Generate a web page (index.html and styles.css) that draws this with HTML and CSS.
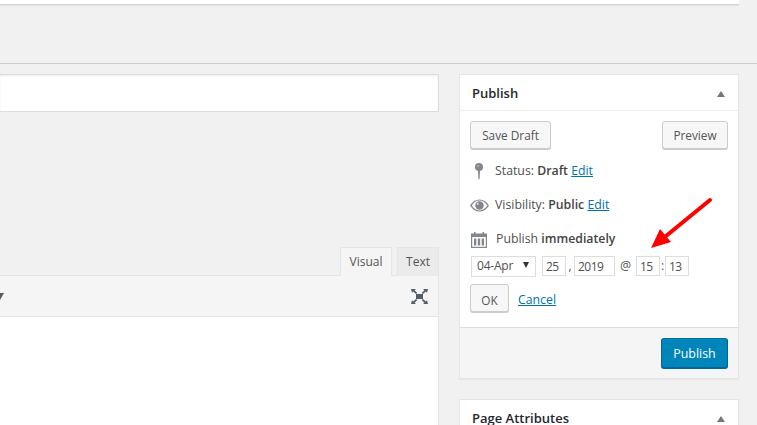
FILE: index.html
```html
<!DOCTYPE html>
<html lang="en">
<head>
<meta charset="utf-8">
<title>Edit Page</title>
<link rel="stylesheet" href="styles.css">
</head>
<body>
<div class="page">
  <div class="topstrip"></div>
  <div class="rule"></div>
  <div class="columns">
    <main class="main">
      <div class="title-input"></div>
      <div class="tabs">
        <span class="tab active">Visual</span>
        <span class="tab plain">Text</span>
      </div>
      <div class="toolbar">
        <svg class="caret" width="6" height="7" viewBox="0 0 6 7"><path d="M-3 0H4L0 7Z" fill="#555d66"/></svg>
        <svg class="fullscreen" width="17" height="15" viewBox="0 0 17 15"><g fill="#555d66"><rect x="5" y="5" width="7" height="5"/><path d="M0 0H5L3.600 1.300 6.300 4 5 5 2.200 2.400 1 3.800Z"/><path d="M17 0H12L13.400 1.300 10.700 4 12 5 14.800 2.400 16 3.800Z"/><path d="M0 15H5L3.600 13.700 6.300 11 5 10 2.200 12.600 1 11.200Z"/><path d="M17 15H12L13.400 13.700 10.700 11 12 10 14.800 12.600 16 11.200Z"/></g></svg>
      </div>
      <div class="editor"></div>
    </main>
    <aside class="side">
      <section class="box publish">
        <header class="box-head"><h2>Publish</h2><span class="toggle"></span></header>
        <div class="box-body">
          <div class="actions">
            <button class="btn draft">Save Draft</button>
            <button class="btn preview">Preview</button>
          </div>
          <div class="row status">
            <svg class="ico" width="8" height="16" viewBox="0 0 8 16"><circle cx="4" cy="4" r="4" fill="#82878c"/><circle cx="3" cy="2.800" r=".9" fill="#c4c6c8"/><path d="M3 7h2l-.4 9h-1.200Z" fill="#82878c"/></svg>
            <span>Status: <b>Draft</b> <a href="#">Edit</a></span>
          </div>
          <div class="row visibility">
            <svg class="ico" width="19" height="13" viewBox="0 0 19 13"><path fill-rule="evenodd" fill="#82878c" d="M0 6.500C2.400 2.600 5.700.4 9.500.4S16.600 2.600 19 6.500c-2.400 3.900-5.700 6.100-9.500 6.100S2.400 10.400 0 6.500ZM1.600 6.500c2 2.900 4.800 4.900 7.900 4.900s5.900-2 7.900-4.900c-2-2.900-4.800-4.900-7.900-4.900S3.600 3.600 1.600 6.500Z"/><circle cx="9.500" cy="6.500" r="4.200" fill="#82878c"/><circle cx="7.800" cy="4.800" r="1.100" fill="#d8d9da"/></svg>
            <span>Visibility: <b>Public</b> <a href="#">Edit</a></span>
          </div>
          <div class="row schedule">
            <svg class="ico" width="16" height="17" viewBox="0 0 16 17"><path fill="#82878c" d="M0 2.500H3V1h1.500v1.500h7V1H13v1.500h3V17H0Z"/><rect x="1.200" y="6" width="13.600" height="9.800" fill="#fff"/><path fill="#82878c" d="M3 7.500h2.300v7H3ZM6.800 7.500h2.400v7H6.800ZM10.700 7.500H13v7h-2.300Z"/></svg>
            <span>Publish <b>immediately</b></span>
          </div>
          <div class="stamp">
            <span class="select">04-Apr<i class="sel-arrow"></i></span>
            <span class="field w-day">25</span><span class="sep">,</span>
            <span class="field w-year">2019</span><span class="sep at">@</span>
            <span class="field w-time">15</span><span class="sep colon">:</span>
            <span class="field w-min">13</span>
          </div>
          <div class="confirm">
            <button class="btn ok">OK</button>
            <a class="cancel" href="#">Cancel</a>
          </div>
          <svg class="arrow" width="64" height="56" viewBox="0 0 64 56"><path d="M60 3 16 39" stroke="#f00" stroke-width="4" stroke-linecap="round" fill="none"/><path d="M1 51 10 32 21 45Z" fill="#f00"/></svg>
        </div>
        <footer class="box-foot"><button class="btn primary">Publish</button></footer>
      </section>
      <section class="box attrs">
        <header class="box-head"><h2>Page Attributes</h2><span class="toggle"></span></header>
      </section>
    </aside>
  </div>
</div>
</body>
</html>
```
FILE: styles.css
```css
* { box-sizing: border-box; }
html, body { margin: 0; height: 100%; }
body {
  background: #f1f1f1;
  color: #505050;
  font: 12.3px/1.4 "Open Sans", sans-serif;
  overflow: hidden;
}
.page { width: 757px; height: 425px; overflow: hidden; }
.topstrip { width: 739px; height: 5px; background: #fff; border-bottom: 1px solid #d6d6d6; box-shadow: 0 1px 1px rgba(0,0,0,.05); }
.rule { height: 1px; margin-top: 58px; background: #ccc; }
.columns { display: flex; align-items: flex-start; margin-top: 10px; }
.main { width: 439px; flex: none; }
.title-input { height: 38px; background: #fff; border: 1px solid #ddd; border-left: 0; box-shadow: inset 0 1px 2px rgba(0,0,0,.07); }
.tabs { display: flex; justify-content: flex-end; gap: 5px; height: 29px; margin-top: 135px; position: relative; z-index: 1; }
.tab { display: block; width: 52px; height: 29px; text-align: center; line-height: 27px; font-size: 12px; color: #555; background: #ebebeb; border: 1px solid #e5e5e5; border-bottom: 0; }
.tab.plain { width: 42px; }
.tab.active { background: #f5f5f5; border-bottom: 1px solid #f5f5f5; }
.toolbar { display: flex; justify-content: space-between; align-items: center; height: 42px; background: #f5f5f5; border: 1px solid #e5e5e5; border-left: 0; margin-top: -1px; padding: 0 10px 0 0; }
.editor { height: 110px; background: #fff; border-right: 1px solid #e5e5e5; }
.side { width: 280px; margin-left: 20px; flex: none; }
.box { background: #fff; border: 1px solid #e5e5e5; box-shadow: 0 1px 1px rgba(0,0,0,.04); }
.box-head { display: flex; justify-content: space-between; align-items: center; height: 36px; padding: 1px 12px 0; border-bottom: 1px solid #eee; }
h2 { margin: 0; font-size: 13px; font-weight: 600; color: #23282d; line-height: 1.4; }
.toggle { width: 0; height: 0; margin: 2px 1px 0 0; border: 4px solid transparent; border-top: 0; border-bottom: 6px solid #72777c; }
.box-body { position: relative; padding: 10px 10px 0 10px; height: 216px; }
.actions { display: flex; justify-content: space-between; }
.btn { display: inline-block; height: 28px; padding: 1px 0 0; font: 11.8px/25px "Open Sans", sans-serif; color: #555; background: #f7f7f7; border: 1px solid #ccc; border-radius: 3px; box-shadow: 0 1px 0 #ccc; }
.draft { width: 81px; }
.preview { width: 66px; }
.ok { width: 39px; padding-top: 3px; }
.cancel { padding-top: 3px; }
.row { display: flex; align-items: center; }
.row b { font-weight: 600; color: #444; }
a { color: #0073aa; }
.status { height: 20px; margin-top: 12px; }
.status .ico { margin: 0 12px 0 5px; }
.visibility { height: 20px; margin-top: 14px; }
.visibility .ico { margin: 0 6px 0 0; }
.schedule { height: 20px; margin-top: 14px; }
.schedule .ico { margin: 0 9px 0 1px; }
.stamp { display: flex; align-items: center; margin: 7px 0 0 1px; font-size: 12px; height: 20px; }
.select { display: flex; justify-content: space-between; align-items: center; flex: none; width: 65px; height: 21px; padding: 0 6px 0 5px; background: #fff; border: 1px solid #ddd; margin-right: 6px; letter-spacing: -.2px; }
.sel-arrow { width: 0; height: 0; margin-top: -2px; border: 3.500px solid transparent; border-top: 6px solid #333; border-bottom: 0; }
.field { flex: none; height: 20px; padding: 0 3px; line-height: 19px; background: #fff; border: 1px solid #ddd; letter-spacing: -.5px; }
.w-day { width: 24px; }
.w-year { width: 41px; }
.w-time { width: 24px; }
.w-min { width: 24px; }
.sep { flex: none; width: 8px; text-align: center; color: #555; }
.at { width: 21px; font-size: 12.5px; }
.colon { width: 5px; }
.confirm { display: flex; align-items: center; gap: 9px; margin-top: 8px; }
.arrow { position: absolute; left: 190px; top: 86px; }
.box-foot { display: flex; justify-content: flex-end; align-items: center; height: 51px; padding: 0 10px 1px; background: #f5f5f5; border-top: 1px solid #ddd; }
.btn.primary { width: 67px; height: 30px; line-height: 28px; padding-top: 1px; color: #fff; background: #0085ba; border-color: #0073aa #006799 #006799; box-shadow: 0 1px 0 #006799; font-size: 12.4px; }
.attrs { margin-top: 20px; }
```
